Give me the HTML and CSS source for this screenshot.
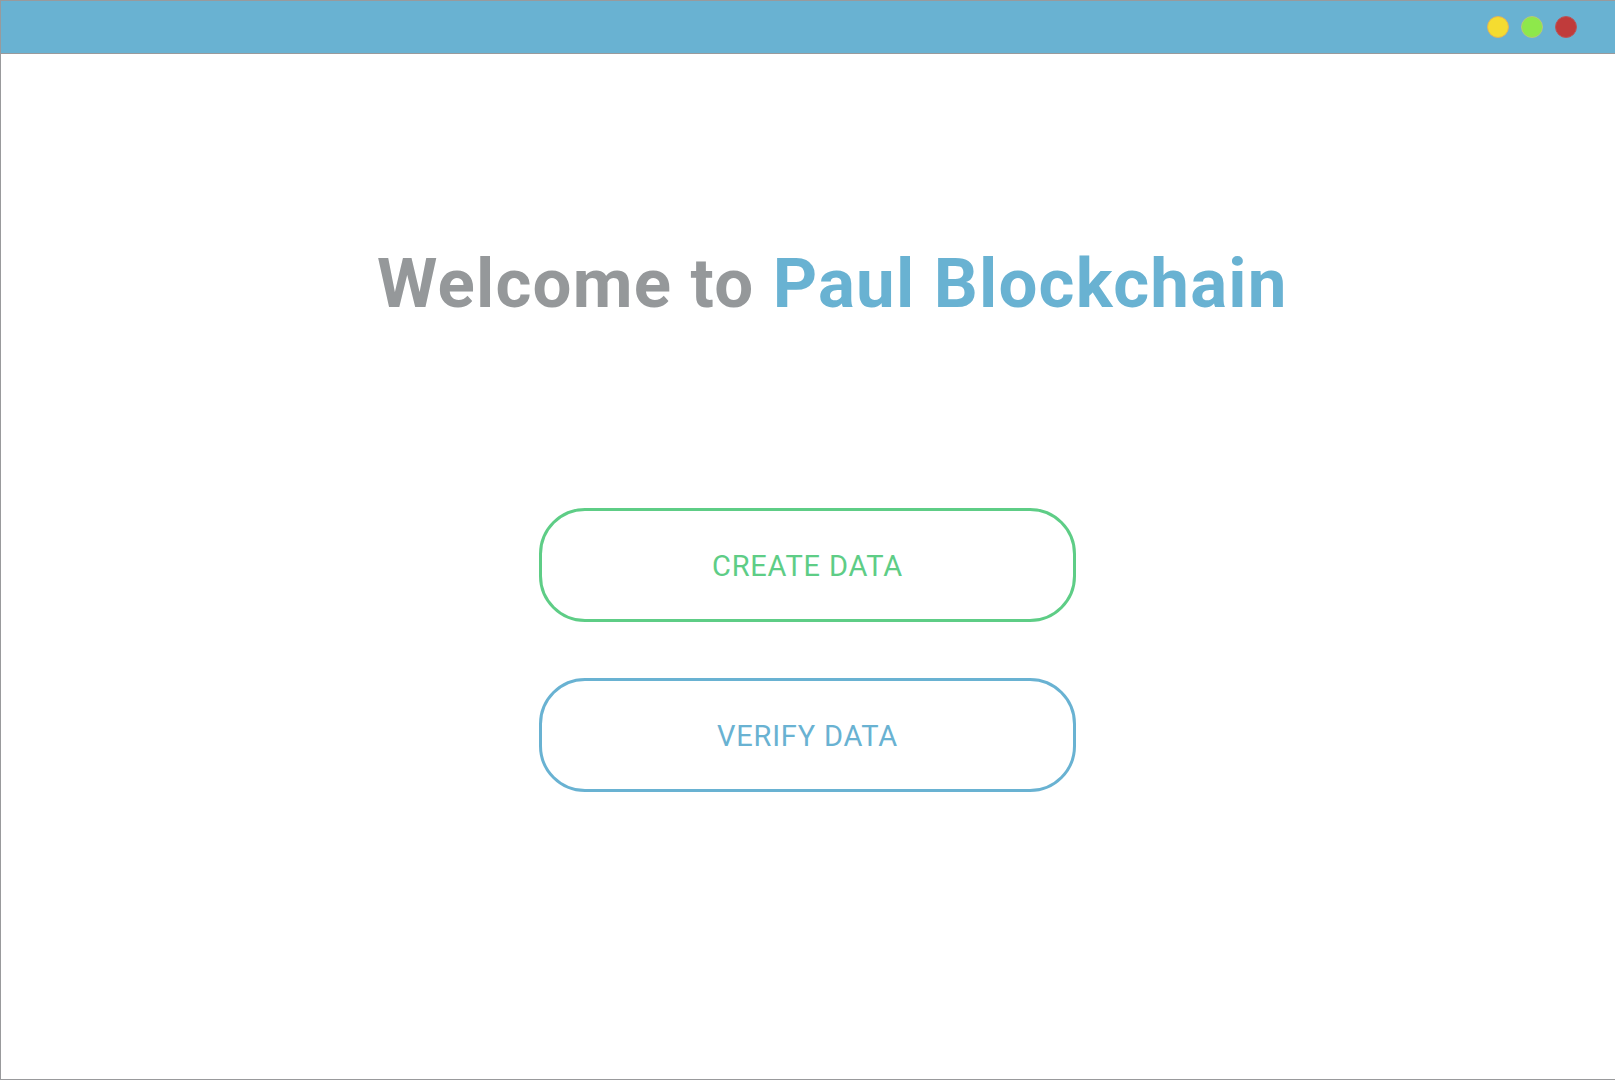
FILE: index.html
```html
<!DOCTYPE html>
<html lang="en">
<head>
<meta charset="utf-8">
<title>Paul Blockchain</title>
<link rel="stylesheet" href="styles.css">
</head>
<body>
<div class="window">
  <header class="titlebar">
    <span class="dot dot-yellow"></span>
    <span class="dot dot-green"></span>
    <span class="dot dot-red"></span>
  </header>
  <main class="content">
    <h1 class="welcome">Welcome to <span class="brand">Paul Blockchain</span></h1>
    <div class="actions">
      <button class="btn btn-create">CREATE DATA</button>
      <button class="btn btn-verify">VERIFY DATA</button>
    </div>
  </main>
</div>
</body>
</html>
```

FILE: styles.css
```css
html, body {
  margin: 0;
  padding: 0;
  background: #ffffff;
}
body {
  font-family: Roboto, "Liberation Sans", sans-serif;
}
.window {
  box-sizing: border-box;
  height: 1080px;
  border-left: 1px solid #999a9c;
  border-top: 1px solid #999a9c;
  border-bottom: 1px solid #999a9c;
  display: flex;
  flex-direction: column;
}
.titlebar {
  height: 52px;
  background: #69b2d2;
  border-bottom: 1px solid #999a9c;
  display: flex;
  align-items: center;
  justify-content: flex-end;
  gap: 12px;
  padding-right: 38px;
}
.dot {
  width: 22px;
  height: 22px;
  border-radius: 50%;
  box-sizing: border-box;
}
.dot-yellow { background: #f5dc30; border: 1px solid #e0b45a; }
.dot-green { background: #8ee84b; border: 1px solid #b7c77a; }
.dot-red { background: #c03b3b; border: 1px solid #b9565a; }
.content {
  flex: 1;
  display: flex;
  flex-direction: column;
}
.welcome {
  margin: 0;
  padding-top: 190px;
  padding-left: 376px;
  font-size: 69px;
  font-weight: 700;
  line-height: 80px;
  letter-spacing: 1.2px;
  color: #95989a;
  white-space: nowrap;
}
.brand {
  color: #69b2d2;
}
.actions {
  margin-top: 184px;
  margin-left: 538px;
  display: flex;
  flex-direction: column;
  gap: 56px;
}
.btn {
  box-sizing: border-box;
  width: 537px;
  height: 114px;
  border-radius: 46px;
  background: #ffffff;
  border: 3px solid;
  font-family: Roboto, "Liberation Sans", sans-serif;
  font-size: 29px;
  font-weight: 400;
  letter-spacing: 0.8px;
  padding: 2px 0 0 0;
}
.btn-create {
  border-color: #5ecd86;
  color: #5ecd86;
}
.btn-verify {
  border-color: #69b2d2;
  color: #69b2d2;
}
```
